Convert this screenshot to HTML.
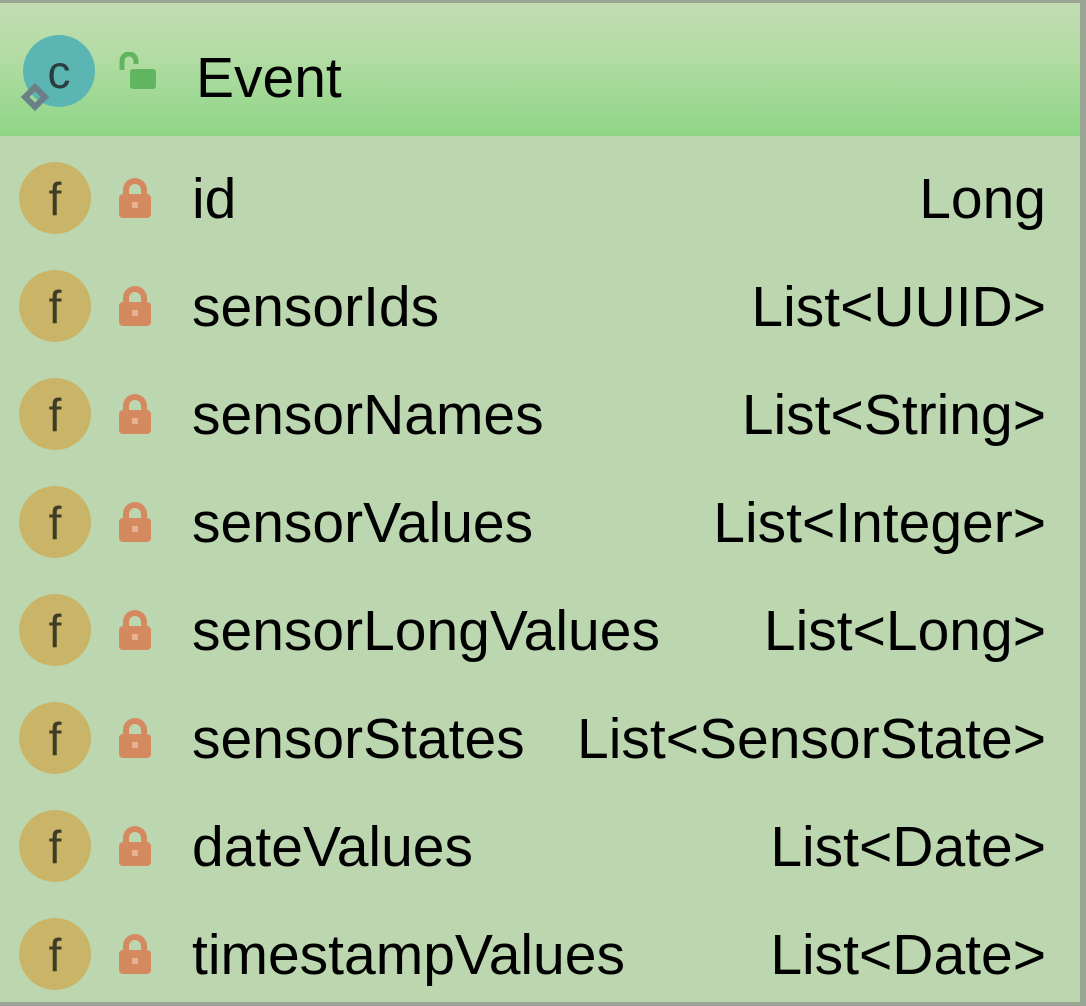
<!DOCTYPE html>
<html><head><style>
html,body{margin:0;padding:0;}
body{width:1086px;height:1006px;position:relative;overflow:hidden;background:#bcd7af;font-family:"Liberation Sans",sans-serif;}
.top{position:absolute;left:0;top:0;width:1086px;height:3px;background:#9aa596;}
.right{position:absolute;right:0;top:0;width:6px;height:1006px;background:#9aa596;}
.bot{position:absolute;left:0;bottom:0;width:1086px;height:4px;background:#9aa596;}
.hdr{position:absolute;left:0;top:3px;width:1080px;height:133px;background:linear-gradient(#c3dcb4,#b3dca4 40%,#8ed586);}
.t{position:absolute;font-size:57px;color:#000;line-height:64px;}
.n{left:192px;}
.ty{right:40px;text-align:right;}
svg{position:absolute;}
</style></head><body>
<div class="hdr"></div>
<div class="top"></div><div class="right"></div><div class="bot"></div>
<svg style="left:15px;top:33px" width="90" height="82" viewBox="0 0 90 82">
<circle cx="44" cy="38" r="36" fill="#5bb5b3"/>
<text x="44" y="55" font-family="Liberation Sans" font-size="46" fill="#2c3d3f" text-anchor="middle">c</text>
<rect x="13" y="57" width="14" height="14" fill="none" stroke="#6b7f86" stroke-width="6" transform="rotate(45 20 64)"/>
</svg>
<svg style="left:117px;top:52px" width="44" height="40" viewBox="0 0 44 40">
<path d="M5 18 V9 a7 7 0 0 1 14 0 V12" fill="none" stroke="#62b560" stroke-width="5"/>
<rect x="13" y="17" width="26" height="20" rx="3" fill="#62b560"/>
</svg>
<div class="t" style="left:196px;top:46px;">Event</div>
<div id="rows"></div>
<script>
var d=[["id","Long"],["sensorIds","List<UUID>"],["sensorNames","List<String>"],["sensorValues","List<Integer>"],["sensorLongValues","List<Long>"],["sensorStates","List<SensorState>"],["dateValues","List<Date>"],["timestampValues","List<Date>"]];
var h="";
d.forEach(function(r,i){var c=198+108*i;
h+='<svg style="left:18px;top:'+(c-37)+'px" width="74" height="74"><circle cx="37" cy="37" r="36" fill="#c9b468"/><text x="37" y="54" font-family="Liberation Sans" font-size="46" fill="#3f3b25" text-anchor="middle">f</text></svg>';
h+='<svg style="left:118px;top:'+(c-20)+'px" width="34" height="42"><path d="M8 18 V12 a9 9 0 0 1 18 0 V18" fill="none" stroke="#d48a5e" stroke-width="6"/><rect x="1" y="16" width="32" height="24" rx="4" fill="#d48a5e"/><rect x="14" y="24" width="6" height="6" fill="#e6b293"/></svg>';
h+='<div class="t n" style="top:'+(c-31)+'px">'+r[0]+'</div>';
h+='<div class="t ty" style="top:'+(c-31)+'px">'+r[1].replace(/</g,"&lt;").replace(/>/g,"&gt;")+'</div>';
});
document.getElementById("rows").innerHTML=h;
</script>
</body></html>
